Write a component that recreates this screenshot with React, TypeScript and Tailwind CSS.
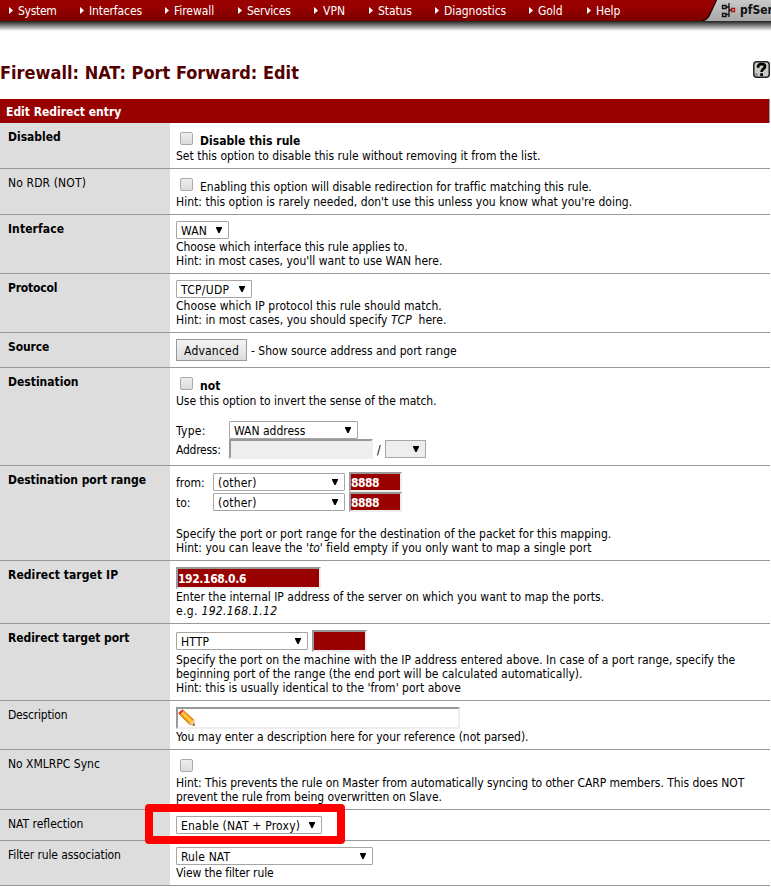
import React from "react";

type Kids = { children?: React.ReactNode };

const NAV: [string, string][] = [
  ["System", "w-[71px] tracking-[-0.3px]"],
  ["Interfaces", "w-[85px] tracking-[-0.1px]"],
  ["Firewall", "w-[73px] tracking-[-0.05px]"],
  ["Services", "w-[76px] tracking-[-0.25px]"],
  ["VPN", "w-[55px]"],
  ["Status", "w-[66px] tracking-[-0.1px]"],
  ["Diagnostics", "w-[94px] tracking-[-0.05px]"],
  ["Gold", "w-[58px] tracking-[-0.1px]"],
  ["Help", "w-[60px] tracking-[-0.1px]"],
];

function Row({ label, bold = false, t = "", h, pt = "pt-[6px]", children }: Kids & { label: string; bold?: boolean; t?: string; h: string; pt?: string }) {
  return (
    <div className={`flex border-b border-[#999] ${h}`}>
      <div className={`w-[170px] shrink-0 bg-[#ddd] pt-[7px] pl-2 ${bold ? "font-bold" : ""} ${t}`}>{label}</div>
      <div className={`flex-1 pl-[6px] ${pt}`}>{children}</div>
    </div>
  );
}

function Line({ t = "tracking-[0.01px]", children }: Kids & { t?: string }) {
  return <div className={`h-[14px] whitespace-pre ${t}`}>{children}</div>;
}

function Check({ bold = false, children }: Kids & { bold?: boolean }) {
  return (
    <div className="flex h-[17px] pl-1">
      <span className="h-[13px] w-[13px] shrink-0 rounded-[2px] border border-[#aaa] bg-linear-to-b from-[#eee] to-[#dcdcdc]" />
      <span className={`ml-[7px] mt-[2px] ${bold ? "font-bold tracking-[0.05px]" : "tracking-[0.01px]"}`}>{children}</span>
    </div>
  );
}

function Select({ w, t = "", grey = false, children }: Kids & { w: string; t?: string; grey?: boolean }) {
  return (
    <div className={`flex h-[18px] shrink-0 items-start justify-between border border-[#a6a6a6] pl-1 pr-[6px] pt-[2px] ${grey ? "bg-[#eee]" : "rounded-[1px] bg-white"} ${w}`}>
      <span className={`whitespace-nowrap ${t}`}>{children}</span>
      <svg className="mt-[3px] shrink-0" width="6" height="6" viewBox="0 0 6 6"><path d="M0 0H6V1L3.600 6H2.400L0 1Z" fill="#000" /></svg>
    </div>
  );
}

function Input({ cls, children }: Kids & { cls: string }) {
  return (
    <div className={`shrink-0 border-2 border-t-[#999] border-l-[#999] border-r-[#eee] border-b-[#eee] ${cls}`}>{children}</div>
  );
}

export default function App() {
  return (
    <div className="h-[888px] w-[771px] overflow-hidden bg-white font-['DejaVu_Sans_Condensed','DejaVu_Sans',sans-serif] text-[12px] leading-[14px] text-black font-stretch-condensed">
      <div className="relative flex h-[21px] overflow-hidden bg-linear-to-b from-[#990000] from-30% to-[#7c0000] pl-[9px] text-white">
        {NAV.map(([name, w]) => (
          <div key={name} className={`flex shrink-0 pt-1 ${w}`}>
            <svg className="mt-[3px] shrink-0" width="4" height="7" viewBox="0 0 4 7"><path d="M0 0L4 3.500L0 7Z" fill="#fff" /></svg>
            <span className="ml-[5px]">{name}</span>
          </div>
        ))}
        <svg className="absolute top-0 right-0" width="71" height="21" viewBox="0 0 71 21">
          <defs>
            <linearGradient id="tab" x1="0" y1="0" x2="0" y2="1"><stop offset="0" stopColor="#c8c8c8" /><stop offset="1" stopColor="#a9a9a9" /></linearGradient>
          </defs>
          <path d="M16.500 0L9.500 15Q7 20.500 1 21H71V0Z" fill="url(#tab)" />
          <path d="M16.500 0L9.500 15Q7 20.500 1 21" fill="none" stroke="#220000" strokeWidth="1.300" />
          <g fill="none" stroke="#111" strokeWidth="1.300">
            <path d="M22.500 5.500h3.500v3h-3.500zM22.500 13.500h3.500v3h-3.500zM29 3v14M26 7h3M26 14.500h3M29 10h2" />
            <path d="M31.500 8.500h3v3h-3z" stroke="#b01010" />
          </g>
        </svg>
        <span className="absolute top-[3px] left-[740px] text-[12px] font-bold whitespace-nowrap text-[#111]">pfSense</span>
      </div>
      <div className="h-[10px] bg-linear-to-b from-[#222] via-[#777] via-40% to-white" />
      <div className="flex h-[68px] items-start justify-between pr-[1px]">
        <h1 className="mt-[31px] text-[18px] leading-[22px] font-bold whitespace-nowrap text-[#550000]">Firewall: NAT: Port Forward: Edit</h1>
        <svg className="mt-[30px]" width="17" height="17" viewBox="0 0 17 17">
          <rect x=".75" y=".75" width="15.500" height="15.500" rx="3" fill="#c9c9c5" stroke="#222" strokeWidth="1.500" />
          <path d="M5.200 6.700V5.200C5.200 3.800 6.500 3.200 8.500 3.200S12 3.900 12 5.500C12 8 8.600 7.500 8.600 11M8.600 12.300V15" fill="none" stroke="#000" strokeWidth="2.700" />
          <rect x="2.500" y="12.500" width="2" height="2" fill="#666" />
        </svg>
      </div>
      <div className="mr-[1px] h-6 border-r border-[#999] bg-[#990000] pt-[6px] pl-[6px] font-bold text-white">Edit Redirect entry</div>
      <div className="mr-[1px]">
        <Row label="Disabled" bold h="h-[46px]" pt="pt-[9px]">
          <Check bold>Disable this rule</Check>
          <Line>Set this option to disable this rule without removing it from the list.</Line>
        </Row>
        <Row label="No RDR (NOT)" t="tracking-[0.13px]" h="h-[46px]" pt="pt-[9px]">
          <Check>Enabling this option will disable redirection for traffic matching this rule.</Check>
          <Line t="tracking-[0.02px]">Hint: this option is rarely needed, don't use this unless you know what you're doing.</Line>
        </Row>
        <Row label="Interface" bold t="tracking-[0.1px]" h="h-[59px]">
          <Select w="w-[53px]" t="tracking-[0.2px]">WAN</Select>
          <div className="pt-[1px]">
            <Line t="tracking-[-0.04px]">Choose which interface this rule applies to.</Line>
            <Line>Hint: in most cases, you'll want to use WAN here.</Line>
          </div>
        </Row>
        <Row label="Protocol" bold t="tracking-[-0.2px]" h="h-[59px]">
          <Select w="w-[76px]" t="tracking-[0.3px]">TCP/UDP</Select>
          <div className="pt-[1px]">
            <Line t="tracking-[0.06px]">Choose which IP protocol this rule should match.</Line>
            <Line t="tracking-[0.02px]">Hint: in most cases, you should specify <em>TCP</em>  here.</Line>
          </div>
        </Row>
        <Row label="Source" bold t="tracking-[-0.1px]" h="h-[35px]">
          <div className="flex">
            <div className="h-[22px] w-[71px] border border-[#999] bg-linear-to-b from-[#f4f4f4] to-[#dcdcdc] pt-1 text-center tracking-[0.2px]">Advanced</div>
            <span className="pt-[5px] pl-1">- Show source address and port range</span>
          </div>
        </Row>
        <Row label="Destination" bold h="h-[98px]" pt="pt-[9px]">
          <Check bold>not</Check>
          <Line t="tracking-[-0.03px]">Use this option to invert the sense of the match.</Line>
          <div className="mt-[13px] flex h-[18px]">
            <span className="w-[53px] pt-[3px] tracking-[0.3px]">Type:</span>
            <Select w="w-[129px]">WAN address</Select>
          </div>
          <div className="flex h-5">
            <span className="w-[53px] pt-1 tracking-[-0.25px]">Address:</span>
            <Input cls="h-5 w-[144px] bg-[#eee]" />
            <span className="w-[12px] pt-1 pl-1">/</span>
            <div className="pt-[1px]"><Select grey w="w-[41px]" /></div>
          </div>
        </Row>
        <Row label="Destination port range" bold t="tracking-[-0.05px]" h="h-[95px]">
          {["from:", "to:"].map((name) => (
            <div key={name} className="flex h-5">
              <span className="w-[37px] pt-1">{name}</span>
              <div className="pt-[1px]"><Select w="w-[132px]" t="tracking-[0.2px]">(other)</Select></div>
              <Input cls="ml-1 h-5 w-[53px] bg-[#990000] pt-[2px] font-bold tracking-[-0.5px] text-white">8888</Input>
            </div>
          ))}
          <div className="pt-[15px]">
            <Line>Specify the port or port range for the destination of the packet for this mapping.</Line>
            <Line t="tracking-[0.03px]">Hint: you can leave the <em>'to'</em> field empty if you only want to map a single port</Line>
          </div>
        </Row>
        <Row label="Redirect target IP" bold t="tracking-[0.08px]" h="h-[63px]">
          <Input cls="h-[22px] w-[145px] bg-[#990000] pt-[3px] font-bold tracking-[-0.4px] text-white">192.168.0.6</Input>
          <div className="pt-[1px]">
            <Line t="tracking-[-0.01px]">Enter the internal IP address of the server on which you want to map the ports.</Line>
            <Line t="tracking-[0.33px]">e.g. <em>192.168.1.12</em></Line>
          </div>
        </Row>
        <Row label="Redirect target port" bold t="tracking-[-0.05px]" h="h-[77px]">
          <div className="flex h-[23px]">
            <div className="pt-[2px]"><Select w="w-[132px]" t="tracking-[0.1px]">HTTP</Select></div>
            <Input cls="ml-1 h-[22px] w-[55px] bg-[#990000]" />
          </div>
          <Line t="tracking-[0.015px]">Specify the port on the machine with the IP address entered above. In case of a port range, specify the</Line>
          <Line>beginning port of the range (the end port will be calculated automatically).</Line>
          <Line>Hint: this is usually identical to the 'from' port above</Line>
        </Row>
        <Row label="Description" t="tracking-[-0.2px]" h="h-[49px]">
          <Input cls="h-[22px] w-[284px]">
            <svg width="17" height="17" viewBox="0 0 17 17">
              <path d="M.5 4.500L4.500 .5L15.500 10.500L16.500 16.500L11 15Z" fill="#f7a015" stroke="#b8691b" strokeWidth=".7" />
              <path d="M3.500 3L13.500 12.700" stroke="#ffd04a" strokeWidth="2" />
              <path d="M.5 4L3.700 .7L5.300 2.200L2.200 5.500Z" fill="#e8324c" />
              <path d="M11 15L15.500 10.500L16.500 16.500Z" fill="#f0c890" />
              <path d="M14.500 15.900L16.200 14.500L16.500 16.500Z" fill="#443322" />
            </svg>
          </Input>
          <div className="pt-[1px]"><Line t="tracking-[-0.01px]">You may enter a description here for your reference (not parsed).</Line></div>
        </Row>
        <Row label="No XMLRPC Sync" h="h-[60px]" pt="pt-[9px]">
          <Check />
          <Line t="tracking-[-0.05px]">Hint: This prevents the rule on Master from automatically syncing to other CARP members. This does NOT</Line>
          <Line t="tracking-[-0.05px]">prevent the rule from being overwritten on Slave.</Line>
        </Row>
        <Row label="NAT reflection" h="h-[31px] relative">
          <Select w="w-[146px]" t="tracking-[0.2px]">Enable (NAT + Proxy)</Select>
          <div className="absolute -top-[6px] left-[145px] h-10 w-[200px] rounded-[4px] border-8 border-[#fe0000]" />
        </Row>
        <Row label="Filter rule association" t="tracking-[-0.1px]" h="h-[45px]">
          <Select w="w-[197px]" t="tracking-[0.15px]">Rule NAT</Select>
          <div className="pt-[1px]"><Line t="tracking-[-0.1px]">View the filter rule</Line></div>
        </Row>
      </div>
    </div>
  );
}
